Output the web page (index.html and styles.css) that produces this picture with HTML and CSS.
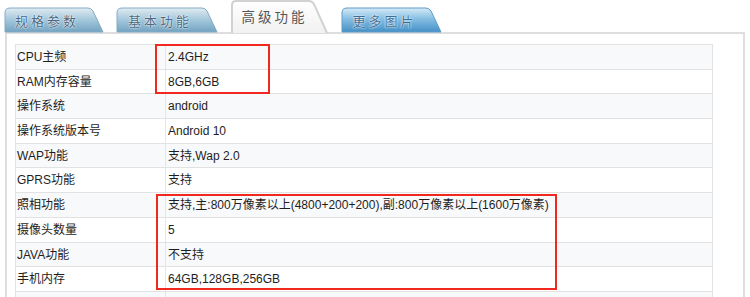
FILE: index.html
```html
<!DOCTYPE html>
<html lang="zh-CN">
<head>
<meta charset="utf-8">
<link rel="stylesheet" href="styles.css">
</head>
<body>
<div class="tabs">
  <div class="tab">
    <svg class="tab-bg" viewBox="0 0 98 24" width="98" height="24">
      <defs>
        <linearGradient id="g1" x1="0" y1="0" x2="0" y2="1">
          <stop offset="0" stop-color="#e0ecf2"/>
          <stop offset="0.45" stop-color="#a9cadd"/>
          <stop offset="1" stop-color="#72a3c2"/>
        </linearGradient>
      </defs>
      <path d="M0,24 V5 Q0,0 5,0 H83 Q86,0 88,3 L98,24 Z" fill="url(#g1)" stroke="#86abc4" stroke-width="1"/>
    </svg>
    <span class="tab-label">规格参数</span>
  </div>
  <div class="tab">
    <svg class="tab-bg" viewBox="0 0 100 24" width="100" height="24">
      <path d="M0,24 V5 Q0,0 5,0 H85 Q88,0 90,3 L100,24 Z" fill="url(#g1)" stroke="#86abc4" stroke-width="1"/>
    </svg>
    <span class="tab-label">基本功能</span>
  </div>
  <div class="tab tab-active">
    <svg class="tab-bg" viewBox="0 0 97 33" width="97" height="33">
      <defs>
        <linearGradient id="g2" x1="0" y1="0" x2="0" y2="1">
          <stop offset="0" stop-color="#ffffff"/>
          <stop offset="1" stop-color="#f1f1f1"/>
        </linearGradient>
      </defs>
      <path d="M1,33 V5 Q1,1 5,1 H78 Q81,1 83,4 L96,33" fill="url(#g2)" stroke="#d2d2d2" stroke-width="2"/>
    </svg>
    <span class="tab-label">高级功能</span>
  </div>
  <div class="tab tab-blue">
    <svg class="tab-bg" viewBox="0 0 99 24" width="99" height="24">
      <defs>
        <linearGradient id="g3" x1="0" y1="0" x2="0" y2="1">
          <stop offset="0" stop-color="#d6eaf7"/>
          <stop offset="0.45" stop-color="#86bfe3"/>
          <stop offset="1" stop-color="#4590c6"/>
        </linearGradient>
      </defs>
      <path d="M0,24 V5 Q0,0 5,0 H84 Q87,0 89,3 L99,24 Z" fill="url(#g3)" stroke="#5f9cc8" stroke-width="1"/>
    </svg>
    <span class="tab-label">更多图片</span>
  </div>
</div>
<div class="panel">
  <div class="spec-wrap">
    <div class="spec">
      <div class="row alt"><div class="k">CPU主频</div><div class="v">2.4GHz</div></div>
      <div class="row"><div class="k">RAM内存容量</div><div class="v">8GB,6GB</div></div>
      <div class="row alt"><div class="k">操作系统</div><div class="v">android</div></div>
      <div class="row"><div class="k">操作系统版本号</div><div class="v">Android 10</div></div>
      <div class="row alt"><div class="k">WAP功能</div><div class="v">支持,Wap 2.0</div></div>
      <div class="row"><div class="k">GPRS功能</div><div class="v">支持</div></div>
      <div class="row alt"><div class="k">照相功能</div><div class="v">支持,主:800万像素以上(4800+200+200),副:800万像素以上(1600万像素)</div></div>
      <div class="row"><div class="k">摄像头数量</div><div class="v">5</div></div>
      <div class="row alt"><div class="k">JAVA功能</div><div class="v">不支持</div></div>
      <div class="row"><div class="k">手机内存</div><div class="v">64GB,128GB,256GB</div></div>
      <div class="row alt"><div class="k">&nbsp;</div><div class="v">&nbsp;</div></div>
    </div>
    <div class="mark mark-1"></div>
    <div class="mark mark-2"></div>
  </div>
</div>
</body>
</html>
```

FILE: styles.css
```css
html, body {
  margin: 0;
  padding: 0;
  background: #ffffff;
  overflow: hidden;
}

body {
  width: 750px;
  height: 297px;
  font-family: "Liberation Sans", "Noto Sans CJK SC", sans-serif;
  color: #1e1e1e;
}

.tabs {
  display: flex;
  align-items: flex-end;
  gap: 14px;
  height: 32px;
  padding-left: 5px;
  position: relative;
  z-index: 1;
}

.tab {
  display: grid;
  height: 24px;
}

.tab-bg,
.tab-label {
  grid-area: 1 / 1;
}

.tab-bg {
  display: block;
  overflow: visible;
}

.tab-label {
  align-self: center;
  justify-self: center;
  padding-right: 14px;
  padding-top: 2px;
  font-family: "Noto Sans CJK SC", sans-serif;
  font-size: 13px;
  letter-spacing: 3px;
  color: #4a6983;
  text-shadow: 0 0 2px #ffffff, 0 0 1px #ffffff;
  line-height: 16px;
}

.tab-active {
  height: 33px;
  margin-bottom: -1px;
}

.tab-active .tab-label {
  color: #555555;
  padding-top: 0;
  padding-bottom: 2px;
  padding-right: 10px;
  text-shadow: none;
  font-size: 13.5px;
}

.tab-blue .tab-label {
  color: #3f6f96;
}

.panel {
  margin-left: 5px;
  width: 728px;
  height: 254px;
  overflow: hidden;
  border: 2px solid #dedede;
  border-bottom: none;
  padding: 10px 0 0 8px;
}

.spec-wrap {
  position: relative;
  width: 698px;
}

.spec {
  border: 1px solid #e3e3e3;
  border-bottom: none;
}

.row {
  display: grid;
  grid-template-columns: 150px 1fr;
  height: 23.7px;
  border-bottom: 1px solid #e2e2e2;
  font-size: 12px;
  line-height: 24px;
}

.row.alt {
  background: #f8f9fb;
}

.k {
  padding-left: 1px;
  border-right: 1px solid #e6e6e6;
  white-space: nowrap;
}

.v {
  padding-left: 2px;
  white-space: nowrap;
}

.mark {
  position: absolute;
  border: 2px solid #f0281e;
  box-sizing: border-box;
}

.mark-1 {
  left: 140px;
  top: 0;
  width: 115px;
  height: 50px;
}

.mark-2 {
  left: 141px;
  top: 150px;
  width: 401px;
  height: 96px;
}
```
